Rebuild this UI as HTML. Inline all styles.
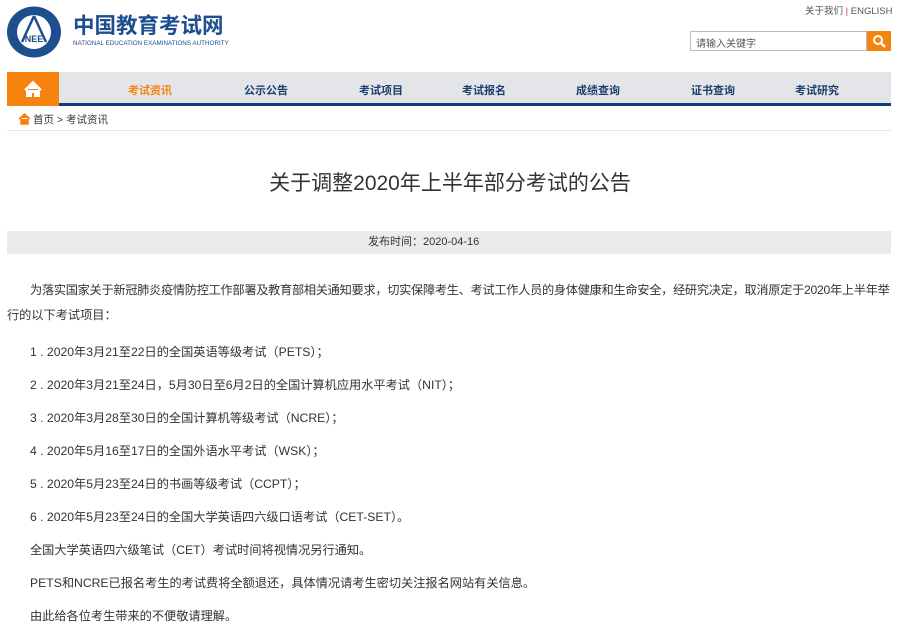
<!DOCTYPE html>
<html><head><meta charset="utf-8"><style>
*{margin:0;padding:0;box-sizing:border-box}
body{width:900px;height:631px;overflow:hidden;background:#fff;font-family:"Liberation Sans","Noto Sans CJK SC",sans-serif;color:#333;position:relative}
.a{position:absolute}
.nav{left:7px;top:72px;width:884px;height:34px;background:#e4e5e9;border-bottom:3px solid #0d3b7c}
.home{left:0;top:0;width:52px;height:34px;background:#f7830f}
.nav span{position:absolute;top:10px;font-size:11px;font-weight:bold;color:#1d3f6e}
p{position:absolute;left:7px;width:884px;font-size:12.2px;color:#333;line-height:25px;white-space:nowrap}
</style></head><body>
<svg class="a" style="left:6px;top:6px" width="56" height="52" viewBox="0 0 56 52">
<ellipse cx="28" cy="26" rx="27" ry="25.5" fill="#1d4e8f"/>
<circle cx="28" cy="26" r="17" fill="#fff"/>
<path d="M28 10 L16 36 M28 10 L40 36" stroke="#1d4e8f" stroke-width="2.5" fill="none"/>
<text x="28" y="36" font-size="9" font-weight="bold" fill="#1d4e8f" text-anchor="middle" font-family="Liberation Sans">NEE</text>
</svg>
<div class="a" style="left:73px;top:11px;font-size:21.5px;font-weight:bold;color:#1d4e8f;font-family:'Noto Sans CJK SC',sans-serif;line-height:28px">中国教育考试网</div>
<div class="a" style="left:73px;top:40px;font-size:6.3px;color:#1d4e8f;white-space:nowrap">NATIONAL EDUCATION EXAMINATIONS AUTHORITY</div>
<div class="a" style="left:805px;top:3px;font-size:9.5px;color:#555;white-space:nowrap">关于我们 <span style="color:#b44">|</span> ENGLISH</div>
<div class="a" style="left:690px;top:31px;width:177px;height:20px;border:1px solid #bbb;font-size:10px;color:#555;padding:3px 0 0 5px">请输入关键字</div>
<div class="a" style="left:867px;top:31px;width:24px;height:20px;background:#f7830f"><svg width="24" height="20"><circle cx="11" cy="9" r="4" stroke="#fff" stroke-width="2" fill="none"/><path d="M14 12l4 4" stroke="#fff" stroke-width="2.5"/></svg></div>
<div class="a nav">
<div class="a home"><svg width="52" height="34"><path d="M18 18 L26 10 L34 18 M20 17 V24 H24 V20 H28 V24 H32 V17" fill="#fff" stroke="#fff" stroke-width="2"/></svg></div>
<span style="left:121px;color:#f7830f">考试资讯</span>
<span style="left:237px">公示公告</span>
<span style="left:352px">考试项目</span>
<span style="left:455px">考试报名</span>
<span style="left:569px">成绩查询</span>
<span style="left:684px">证书查询</span>
<span style="left:788px">考试研究</span>
</div>
<svg class="a" style="left:18px;top:113px" width="13" height="12"><path d="M1 6 L6.5 1 L12 6 M3 5 V11 H10 V5" fill="#f7830f" stroke="#f7830f" stroke-width="1.5"/></svg>
<div class="a" style="left:33px;top:112px;font-size:10.5px;color:#333">首页 &gt; 考试资讯</div>
<div class="a" style="left:7px;top:130px;width:884px;border-top:1px solid #e5e5e5"></div>
<div class="a" style="left:0;width:900px;top:167px;text-align:center;font-size:21px;color:#333">关于调整2020年上半年部分考试的公告</div>
<div class="a" style="left:7px;top:231px;width:884px;height:23px;background:#ebebeb"></div>
<div class="a" style="left:368px;top:231px;font-size:11px;line-height:23px;color:#333">发布时间：2020-04-16</div>
<p style="top:278px;left:30px;letter-spacing:-0.28px">为落实国家关于新冠肺炎疫情防控工作部署及教育部相关通知要求，切实保障考生、考试工作人员的身体健康和生命安全，经研究决定，取消原定于2020年上半年举</p>
<p style="top:303px">行的以下考试项目：</p>
<p style="top:340px;left:30px">1 . 2020年3月21至22日的全国英语等级考试（PETS）；</p>
<p style="top:373px;left:30px">2 . 2020年3月21至24日，5月30日至6月2日的全国计算机应用水平考试（NIT）；</p>
<p style="top:406px;left:30px">3 . 2020年3月28至30日的全国计算机等级考试（NCRE）；</p>
<p style="top:439px;left:30px">4 . 2020年5月16至17日的全国外语水平考试（WSK）；</p>
<p style="top:472px;left:30px">5 . 2020年5月23至24日的书画等级考试（CCPT）；</p>
<p style="top:505px;left:30px">6 . 2020年5月23至24日的全国大学英语四六级口语考试（CET-SET）。</p>
<p style="top:538px;left:30px">全国大学英语四六级笔试（CET）考试时间将视情况另行通知。</p>
<p style="top:571px;left:30px">PETS和NCRE已报名考生的考试费将全额退还，具体情况请考生密切关注报名网站有关信息。</p>
<p style="top:604px;left:30px">由此给各位考生带来的不便敬请理解。</p>
</body></html>
